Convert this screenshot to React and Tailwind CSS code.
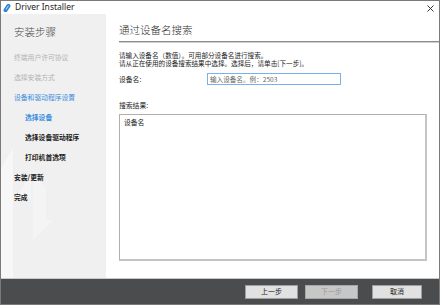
import React from "react";

const cjk = "font-['Noto_Sans_CJK_SC','Noto_Sans',sans-serif]";

function NavItem({ label, state, indent }) {
    const color = {
        done: "text-[#b3b3b3]",
        group: "text-[#3d8ddc]",
        current: "text-[#3a8ee0] font-bold",
        todo: "text-[#222] font-bold",
    }[state];
    return (
        <div className={`h-[20px] flex items-center text-[6.8px] leading-none ${indent ? "pl-[24px]" : "pl-[13px]"} ${color}`}>
            {label}
        </div>
    );
}

export default function App() {
    return (
        <div className={`w-[440px] h-[305px] border border-[#7a7a7a] bg-white flex flex-col overflow-hidden ${cjk}`}>
            {/* title bar */}
            <div className="h-[13px] shrink-0 flex items-center justify-between pl-[2px] pr-[5px]">
                <div className="flex items-center gap-[4px]">
                    <svg width="8" height="8" viewBox="0 0 8 8">
                        <rect x="2" y="-0.5" width="4" height="9" rx="2" fill="#2a7fd6" transform="rotate(35 4 4)" />
                        <rect x="3.3" y="1" width="1.2" height="5" rx="0.6" fill="#9fd0ff" transform="rotate(35 4 4)" />
                    </svg>
                    <span className="text-[8.5px] text-[#222] font-['Noto_Sans',sans-serif] leading-none">Driver Installer</span>
                </div>
                <svg width="7" height="7" viewBox="0 0 7 7" className="mt-[1px]">
                    <path d="M0.5 0.5 L6.5 6.5 M6.5 0.5 L0.5 6.5" stroke="#333" strokeWidth="1" />
                </svg>
            </div>

            {/* body */}
            <div className="flex flex-1 min-h-0">
                <div className="w-[105px] shrink-0 bg-[#f0f0f0] relative">
                    <svg className="absolute left-0 bottom-0" width="105" height="150" viewBox="0 0 105 150">
                        <polygon points="0,40 12,20 12,150 0,150" fill="#f7f7f7" />
                        <polygon points="15,70 30,45 30,70" fill="#f5f5f5" />
                        <polygon points="32,45 32,112 52,92 45,92 45,60" fill="#f4f4f4" />
                    </svg>
                    <div className="relative">
                        <div className="mt-[11px] pl-[13px] h-[14px] flex items-center text-[10.5px] font-light text-[#4a4a4a] leading-none">
                            安装步骤
                        </div>
                        <div className="mt-[8px]">
                            <NavItem label="终端用户许可协议" state="done" />
                            <NavItem label="选择安装方式" state="done" />
                            <NavItem label="设备和驱动程序设置" state="group" />
                            <NavItem label="选择设备" state="current" indent />
                            <NavItem label="选择设备驱动程序" state="todo" indent />
                            <NavItem label="打印机首选项" state="todo" indent />
                            <NavItem label="安装/更新" state="todo" />
                            <NavItem label="完成" state="todo" />
                        </div>
                    </div>
                </div>

                <div className="flex-1 flex flex-col pl-[13px]">
                    <div className="mt-[9px] h-[14px] flex items-center text-[10.5px] font-light text-[#333] leading-none">
                        通过设备名搜索
                    </div>
                    <div className="mt-[4px] h-[2px] border-t border-[#8c8c8c] bg-[#cfcfcf]" />
                    <div className="mt-[8px] text-[6.6px] leading-[8px] text-[#222]">
                        <p>请输入设备名（数值）。可用部分设备名进行搜索。</p>
                        <p>请从正在使用的设备搜索结果中选择。选择后，请单击[下一步]。</p>
                    </div>
                    <div className="mt-[6px] flex items-center h-[12px]">
                        <span className="w-[88px] text-[6.8px] leading-none text-[#222]">设备名:</span>
                        <div className="w-[134px] h-[12px] border border-[#79b2ea] flex items-center pl-[2px] text-[6.6px] leading-none text-[#666]">
                            输入设备名。例：2503
                        </div>
                    </div>
                    <div className="mt-[17px] text-[6.8px] leading-none text-[#222]">搜索结果:</div>
                    <div className="mt-[5px] mr-[12px] h-[147px] border border-[#b0b0b0] border-b-2 border-r-2 border-b-[#c4c4c4] border-r-[#c4c4c4] pl-[4px] pt-[4px] text-[6.8px] leading-none text-[#222]">
                        设备名
                    </div>
                </div>
            </div>

            <div className="h-[1px] shrink-0 bg-[#c9c9c9]" />

            {/* bottom bar */}
            <div className="h-[25px] shrink-0 bg-[#4b4c4e] flex items-center justify-end pr-[17px]">
                <button className="w-[53px] h-[14px] bg-[#e1e1e1] border border-[#9e9e9e] text-[7px] leading-none text-[#222]">上一步</button>
                <button className="ml-[7px] w-[53px] h-[14px] bg-[#c7c7c7] border border-[#a8a8a8] text-[7px] leading-none text-[#9b9b9b]">下一步</button>
                <button className="ml-[14px] w-[50px] h-[14px] bg-[#e1e1e1] border border-[#9e9e9e] text-[7px] leading-none text-[#222]">取消</button>
            </div>
        </div>
    );
}
